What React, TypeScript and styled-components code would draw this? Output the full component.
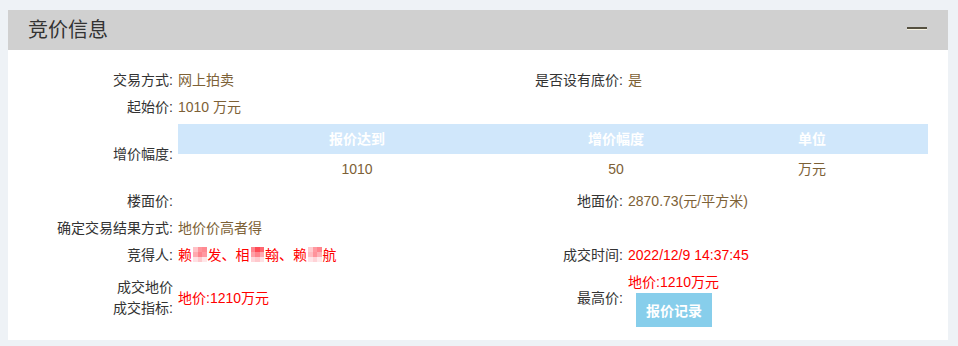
import styled, { createGlobalStyle } from 'styled-components';

const GlobalStyle = createGlobalStyle`
	body {
		margin: 0;
		background: #eef2f6;
		font-family: "Liberation Sans", "Noto Sans CJK SC", sans-serif;
		font-size: 14px;
		line-height: 21px;
		color: #333;
	}
`;

const Page = styled.div`
	padding: 10px 10px 4px 8px;
`;

const Card = styled.section`
	width: 940px;
	background: #fff;
`;

const CardHeader = styled.div`
	height: 40px;
	background: #d0d0d0;
	display: flex;
	align-items: center;
	justify-content: space-between;
	padding: 0 21px 0 20px;
`;

const Title = styled.h2`
	margin: 0;
	font-size: 20px;
	line-height: 28px;
	font-weight: normal;
	color: #333;
`;

const Collapse = styled.span`
	width: 20px;
	height: 2px;
	background: #555040;
	box-shadow: 0 1px 0 #f6f2e2;
	margin-top: -5px;
`;

const Body = styled.div`
	display: grid;
	grid-template-columns: 165px 352px 88px 300px;
	column-gap: 5px;
	grid-auto-rows: minmax(27px, auto);
	padding: 17px 20px 13px 0;
`;

const Label = styled.div`
	display: flex;
	align-items: center;
	justify-content: flex-end;
	text-align: right;
	line-height: 21px;
	white-space: nowrap;
`;

const Value = styled.div<{ $red?: boolean; $span?: number }>`
	display: flex;
	align-items: center;
	line-height: 21px;
	color: ${p => (p.$red ? '#ff0000' : '#7d6136')};
	grid-column: span ${p => p.$span ?? 1};
	white-space: nowrap;
`;

const StackValue = styled.div`
	display: flex;
	flex-direction: column;
	align-items: flex-start;
	padding-top: 2px;
	color: #ff0000;
	line-height: 22px;
`;

const TableWrap = styled.div`
	grid-column: span 3;
	padding: 3px 0 4px;
`;

const StepTable = styled.table`
	width: 100%;
	border-collapse: collapse;
	font-size: 14px;
	line-height: 21px;
`;

const Th = styled.th<{ $w?: number }>`
	height: 30px;
	padding: 0;
	background: #d0e7fb;
	color: #fff;
	font-weight: bold;
	width: ${p => (p.$w ? `${p.$w}px` : 'auto')};
`;

const Td = styled.td`
	height: 30px;
	padding: 0;
	text-align: center;
	color: #7d6136;
`;

const RecordButton = styled.button`
	margin: 0 0 0 8px;
	width: 76px;
	height: 34px;
	border: 0;
	background: #87ceeb;
	color: #fff;
	font: bold 14px "Liberation Sans", "Noto Sans CJK SC", sans-serif;
`;

const Mosaic = styled.span`
	display: inline-grid;
	grid-template-columns: repeat(3, 4.5px);
	grid-auto-rows: 5px;
	align-self: flex-start;
	margin: 5px 1px 0;
`;

const Tile = styled.span<{ $c: string }>`
	background: ${p => p.$c};
`;

const blurs: string[][] = [
	['#ffc2c7', '#ff959c', '#ff8a92', '#ffaab0', '#ff838c', '#ff98a0', '#ffe0e3', '#ffc9cd', '#ffe6e8'],
	['#ff848d', '#ff4a55', '#ff6670', '#ffa0a7', '#ff848c', '#ffaab0', '#ffd6da', '#ffc8cc', '#ffe2e5'],
	['#ffccd0', '#ff9aa1', '#ff858e', '#ffbcc1', '#ff939b', '#ffb0b6', '#ffe4e7', '#ffd3d7', '#ffe9eb'],
];

const Blur = ({ i }: { i: number }) => (
	<Mosaic>
		{blurs[i].map((c, k) => (
			<Tile key={k} $c={c} />
		))}
	</Mosaic>
);

export default function App() {
	return (
		<Page>
			<GlobalStyle />
			<Card>
				<CardHeader>
					<Title>竞价信息</Title>
					<Collapse />
				</CardHeader>
				<Body>
					<Label>交易方式:</Label>
					<Value>网上拍卖</Value>
					<Label>是否设有底价:</Label>
					<Value>是</Value>

					<Label>起始价:</Label>
					<Value $span={3}>1010 万元</Value>

					<Label>增价幅度:</Label>
					<TableWrap>
						<StepTable>
							<thead>
								<tr>
									<Th $w={358}>报价达到</Th>
									<Th $w={160}>增价幅度</Th>
									<Th>单位</Th>
								</tr>
							</thead>
							<tbody>
								<tr>
									<Td>1010</Td>
									<Td>50</Td>
									<Td>万元</Td>
								</tr>
							</tbody>
						</StepTable>
					</TableWrap>

					<Label>楼面价:</Label>
					<Value />
					<Label>地面价:</Label>
					<Value>2870.73(元/平方米)</Value>

					<Label>确定交易结果方式:</Label>
					<Value $span={3}>地价价高者得</Value>

					<Label>竞得人:</Label>
					<Value $red>
						赖<Blur i={0} />发、相<Blur i={1} />翰、赖<Blur i={2} />航
					</Value>
					<Label>成交时间:</Label>
					<Value $red>2022/12/9 14:37:45</Value>

					<Label>
						成交地价
						<br />
						成交指标:
					</Label>
					<Value $red>地价:1210万元</Value>
					<Label>最高价:</Label>
					<StackValue>
						<span>地价:1210万元</span>
						<RecordButton>报价记录</RecordButton>
					</StackValue>
				</Body>
			</Card>
		</Page>
	);
}
